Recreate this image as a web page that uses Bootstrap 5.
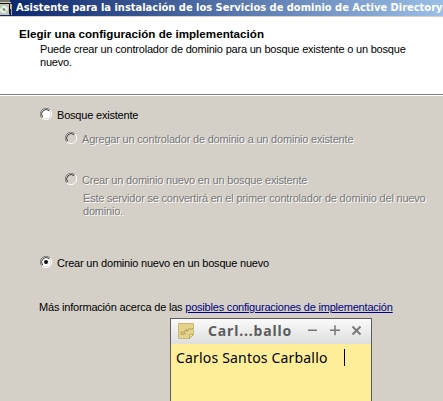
<!DOCTYPE html>
<html lang="es">
<head>
<meta charset="utf-8">
<title>Asistente para la instalación</title>
<link href="https://cdn.jsdelivr.net/npm/bootstrap@5.3.0/dist/css/bootstrap.min.css" rel="stylesheet">
<style>
body{width:443px;height:401px;overflow:hidden;background:#d4d0c8;color:#000;font:11px/13px "Liberation Sans",Arial,sans-serif;letter-spacing:-.2px;white-space:nowrap}
.titlebar{height:17px;background:linear-gradient(90deg,#0a246a,#a6caf0 475px);color:#fff;font:bold 11px/15px "DejaVu Sans Condensed","DejaVu Sans",sans-serif;letter-spacing:0;border-bottom:1px solid #d4d0c8}
.titlebar svg{width:13px;height:15px;margin-right:3px}
.header{height:79px;background:#fff;padding:10px 0 0 19px}
.header h1{font-size:11.6px;line-height:13px;font-weight:bold;letter-spacing:.02px;margin:0 0 3px}
.header p{margin:0 0 0 21px}
.sep{height:2px;border-top:1px solid #808080;background:#fff;margin-top:-2px}
.options{padding:13px 0 0 40px}
.opt svg{width:12px;height:12px;margin:-1px 5px 0 0}
.sub{margin-left:25px}
.off{color:#777;text-shadow:1px 1px 0 #fff}
.first-sub{margin-top:11px}
.second-sub{margin-top:28px}
.detail{margin:5px 0 0 43px}
.new-forest{margin-top:39px}
.face-on{--face:#fff}
.face-off{--face:#d4d0c8}
.more{margin:31px 0 0 39px}
.more a{color:#00007f}
.note{width:202px;height:83px;margin:4px 0 0 170px;border:1px solid #5c5c60;border-bottom:0;background:#ffee99}
.notebar{height:25px;background:linear-gradient(#fafafa,#dedede);color:#5d5d5d;padding:0 0 1px 7px}
.notebar strong{font:bold 14px/22px "Noto Sans",sans-serif;letter-spacing:.85px;margin-left:13px;width:85px}
.controls{margin-left:15px;margin-top:-1px}
.notetext{font:14px/20px "Noto Sans",sans-serif;letter-spacing:.18px;padding:4px 0 0 5px}
.caret{width:1px;height:17px;background:#000;margin:1px 0 0 16px}
</style>
</head>
<body>
<svg class="d-none">
 <defs>
  <g id="ring">
   <circle cx="6" cy="6" r="4.5" fill="var(--face)"/>
   <path d="M1.900 10A5.500 5.500 0 0 1 10 1.900" fill="none" stroke="#808080"/>
   <path d="M2.700 9A4.500 4.500 0 0 1 9.200 2.800" fill="none" stroke="#404040"/>
   <path d="M10 1.900A5.500 5.500 0 0 1 1.900 10" fill="none" stroke="#fff"/>
  </g>
 </defs>
</svg>
<div class="titlebar d-flex">
 <svg viewBox="0 0 13 15"><path d="M0 0h10v4H0z" fill="#77766c"/><path d="M0 2h11v1H0z" fill="#d4d0c0"/><path d="M0 4h10v11H0z" fill="#c9c8bd"/><path d="M0 3.500h9.500v11" stroke="#111" fill="none"/><path d="M11 4h1v11h-1z" fill="#aaa"/><path d="M10 4h1v5h-1z" fill="#e4c455"/><circle cx="4" cy="9.500" r="4.500" fill="#e8eee8" stroke="#9aa59d" stroke-width=".7"/><path d="M4 9.500 0 7.500 1 6z" fill="#aee0a0"/><path d="M4 9.500 8 11 7 13z" fill="#a4dca4"/><circle cx="4" cy="9.500" r="1.200" fill="#777"/></svg>
 <span>Asistente para la instalación de los Servicios de dominio de Active Directory</span>
</div>
<header class="header">
 <h1>Elegir una configuración de implementación</h1>
 <p>Puede crear un controlador de dominio para un bosque existente o un bosque<br>nuevo.</p>
</header>
<div class="sep"></div>
<main class="options">
 <div class="opt face-on d-flex"><svg viewBox="0 0 12 12"><use href="#ring"/></svg><span>Bosque existente</span></div>
 <div class="opt sub off face-off first-sub d-flex"><svg viewBox="0 0 12 12"><use href="#ring"/></svg><span>Agregar un controlador de dominio a un dominio existente</span></div>
 <div class="opt sub off face-off second-sub d-flex"><svg viewBox="0 0 12 12"><use href="#ring"/></svg><span>Crear un dominio nuevo en un bosque existente</span></div>
 <div class="off detail">Este servidor se convertirá en el primer controlador de dominio del nuevo<br>dominio.</div>
 <div class="opt face-on new-forest d-flex"><svg viewBox="0 0 12 12"><use href="#ring"/><circle cx="6" cy="6" r="2" fill="#000"/></svg><span>Crear un dominio nuevo en un bosque nuevo</span></div>
</main>
<p class="more">Más información acerca de las <a href="#">posibles configuraciones de implementación</a></p>
<section class="note">
 <div class="notebar d-flex align-items-center">
  <svg width="17" height="17" viewBox="0 0 17 17"><path d="M.5.5h15v11l-4 4H.5z" fill="#e5d38c" stroke="#c9b878"/><path d="M15.500 11.500h-4v4z" fill="#f5e7a8" stroke="#bfa95c"/><path d="M2 10.500l3-2 1 1 2-3 1 2 2-3 1 1 3-1M3 11.500l5-1" fill="none" stroke="#9d8b4d" stroke-width=".8"/></svg>
  <strong>Carl...ballo</strong>
  <svg class="controls" width="54" height="11" viewBox="0 0 54 11" fill="none" stroke="#777" stroke-width="1.500"><path d="M0 5.250h9M22 5.250h10M27 .3v10"/><path d="M44.500 1.500l8 8M52.500 1.500l-8 8" stroke-width="1.900"/></svg>
 </div>
 <div class="notetext d-flex"><span>Carlos Santos Carballo</span><span class="caret"></span></div>
</section>
</body>
</html>
